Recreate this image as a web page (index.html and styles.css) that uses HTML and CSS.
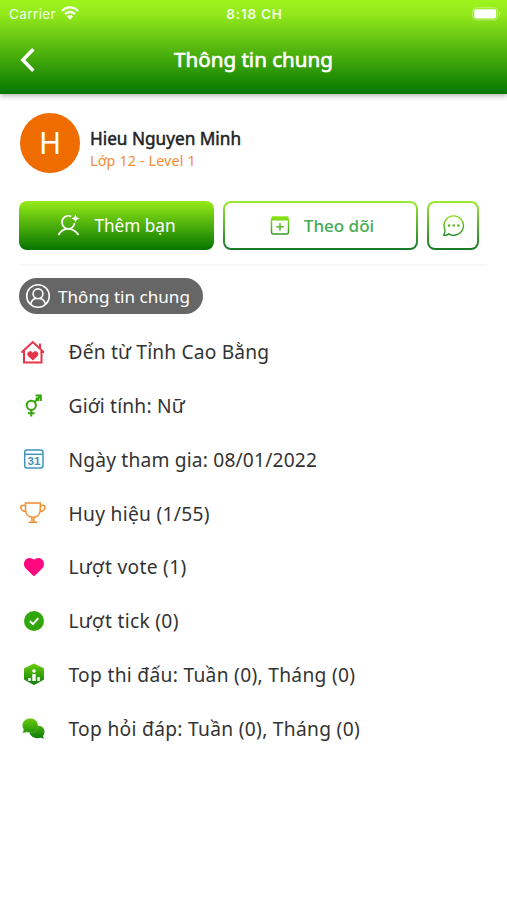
FILE: index.html
```html
<!DOCTYPE html>
<html lang="vi">
<head>
<meta charset="utf-8">
<title>Thông tin chung</title>
<link rel="stylesheet" href="styles.css">
</head>
<body>
<svg width="0" height="0" class="defs" aria-hidden="true">
  <defs>
    <linearGradient id="green" x1="0" y1="0" x2="0" y2="24" gradientUnits="userSpaceOnUse"><stop offset="0" stop-color="#93e81a"/><stop offset="1" stop-color="#188028"/></linearGradient>
    <linearGradient id="leaf" x1="0" y1="0" x2="0" y2="24" gradientUnits="userSpaceOnUse"><stop offset="0" stop-color="#79d80d"/><stop offset="1" stop-color="#087c08"/></linearGradient>
  </defs>
</svg>
<header class="header">
  <div class="status">
    <div class="carrier"><span>Carrier</span>
      <svg width="18" height="14" viewBox="0 0 18 14" fill="none" stroke="#fff" stroke-width="2.5"><path d="M.8 4.9Q9-2.4 17.2 4.9M3.900 8.100Q9 3.700 14.100 8.100"/><path d="M9 13.700 5.800 10.400Q9 7.800 12.200 10.400Z" fill="#fff" stroke="none"/></svg>
    </div>
    <span class="time">8:18 CH</span>
    <svg class="battery" width="30" height="14" viewBox="0 0 30 14"><rect x=".7" y=".7" width="25" height="12.2" rx="3.500" fill="none" stroke="#fff" stroke-opacity=".4"/><rect x="2.200" y="2.200" width="22" height="9.200" rx="1.800" fill="#fff"/><path d="M27.200 4.500q2.400 2.300 0 4.600z" fill="#fff" fill-opacity=".5"/></svg>
  </div>
  <div class="navbar">
    <svg class="back" width="16" height="26" viewBox="0 0 16 26" fill="none" stroke="#fff" stroke-width="3.500"><path d="M13.300 2.300 2.800 13l10.500 10.700"/></svg>
    <h1>Thông tin chung</h1>
  </div>
</header>
<main>
  <section class="profile">
    <div class="avatar">H</div>
    <div><div class="name">Hieu Nguyen Minh</div><div class="level">Lớp 12 - Level 1</div></div>
  </section>
  <section class="actions">
    <div class="btn primary">
      <svg width="24" height="24" viewBox="0 0 24 24" fill="none" stroke="#fff" stroke-width="1.700"><path d="M14.200 2.500A6.300 6.300 0 0 0 5 8c0 4 2.700 6.800 6 6.800S17 12.500 17.500 9M1.500 21c2-4 5.500-6.200 9.500-6.200s8 2.200 10.500 6.200"/><path d="M18.500 .5 19.700 3.300 22.500 4.500 19.700 5.700 18.500 8.500 17.300 5.700 14.500 4.500 17.300 3.300Z" fill="#fff" stroke="none"/></svg>
      <span>Thêm bạn</span>
    </div>
    <div class="btn outline follow">
      <svg width="20" height="19" viewBox="0 0 20 19" fill="none" stroke="url(#green)" stroke-width="1.500"><path d="M2.500 1h15l1 3v12a2 2 0 0 1-2 2H3.500a2 2 0 0 1-2-2V4zM10 7v7.500M6.300 10.800h7.400"/><path d="M2.500 1h15l1 3.500h-17z" fill="url(#green)" stroke="none"/></svg>
      <span>Theo dõi</span>
    </div>
    <div class="btn outline chat">
      <svg width="23" height="23" viewBox="0 0 23 23" fill="none" stroke="url(#green)" stroke-width="1.400"><path d="M2.900 15.500A9.700 9.700 0 1 1 6.800 19.900Q4.500 21.700 1.700 21.100Q3.200 19 2.900 15.500Z"/><g fill="url(#green)" stroke="none"><circle cx="7" cy="11.500" r="1.300"/><circle cx="11.700" cy="11.500" r="1.300"/><circle cx="16.400" cy="11.500" r="1.300"/></g></svg>
    </div>
  </section>
  <div class="divider"></div>
  <div class="pill">
    <svg width="26" height="26" viewBox="0 0 26 26" fill="none" stroke="#fff" stroke-width="1.600"><circle cx="13" cy="13" r="11.300"/><circle cx="13" cy="10.800" r="4.900"/><path d="M5.500 21.300Q7 16 11 15.400M20.500 21.300Q19 16 15 15.400"/></svg>
    <span>Thông tin chung</span>
  </div>
  <ul class="info">
    <li><svg viewBox="0 0 26 26" fill="none" stroke="#e8354a" stroke-width="2"><path d="M4 12.500v11.100h17.500V12.500M2 13 12.800 3 23.600 13"/><path d="M1.500 13h3.500M20.500 13h3.500M20 9V4.500"/><path d="M12.800 21.500 8 17C5.500 13.800 10.300 10.200 12.800 13.900c2.500-3.700 7.300-.1 4.800 3.100Z" fill="#e8354a" stroke="none"/></svg><span>Đến từ Tỉnh Cao Bằng</span></li>
    <li><svg viewBox="0 0 26 26" fill="none" stroke="#35a60b" stroke-width="2"><circle cx="11.300" cy="12.300" r="4.600"/><path d="m14.500 9 6-6M15.500 2.600h5.300v5.300M11.300 17v6.500M8 20.300h6.600M16 4.800l3 3"/></svg><span>Giới tính: Nữ</span></li>
    <li><svg viewBox="0 0 26 26" fill="none" stroke="#3f95ba" stroke-width="1.500"><rect x="4.700" y="4" width="18.300" height="18" rx="2.500"/><path d="M4.700 8.300h18"/><text x="13.900" y="19.400" class="date">31</text></svg><span>Ngày tham gia: 08/01/2022</span></li>
    <li class="loose"><svg viewBox="0 0 26 26" fill="none" stroke="#f58b2b" stroke-width="1.500"><path d="M5.500 3h14.800v6.500c0 5-3.200 7.800-7.400 7.800S5.500 14.500 5.500 9.500zM5.500 5.500H2Q.8 5.500.8 7C.8 9.500 3 11.500 6 11.500M20.300 5.500h3.500Q25 5.500 25 7c0 2.500-2.200 4.500-5.200 4.500M11.900 17.300v4M13.900 17.300v4M8.500 22.300h8.800"/></svg><span>Huy hiệu (1/55)</span></li>
    <li class="loose"><svg viewBox="0 0 26 26"><path d="M12.700 21.300 5.800 14.500C2.200 11 4.300 4.300 9 4q3-.2 5 1.600 2-1.800 5-1.600c4.700.3 6.800 7 3.200 10.500L15.300 21.300Q14 22.500 12.700 21.300" fill="#ff087f"/></svg><span>Lượt vote (1)</span></li>
    <li class="loose"><svg viewBox="0 0 26 26"><circle cx="14" cy="13" r="10" fill="#30a60b"/><path d="m9.800 13 3.200 3.200 5.300-6" fill="none" stroke="#fff" stroke-width="1.900"/></svg><span>Lượt tick (0)</span></li>
    <li class="loose"><svg viewBox="0 0 26 26"><path d="M14 2.500 23.300 7q.7.400.7 1.200v9.600q0 .8-.7 1.200L14 24l-9.300-5Q4 18.600 4 17.800V8.200Q4 7.400 4.700 7Z" fill="url(#leaf)"/><path d="M8.300 17h2.500v3H8.300zm4-4h3.400v7h-3.400zm5 3h2.500v4h-2.500z" fill="#fff"/><circle cx="14" cy="10" r="1.800" fill="#fff"/></svg><span>Top thi đấu: Tuần (0), Tháng (0)</span></li>
    <li class="loose"><svg viewBox="0 0 26 26"><path d="M24.500 16.500q0 3-1.500 4.500.1 1.500 1.500 2.500-2 .2-3.500-.8-9 2-11.500-4.700c0-9 15-10 15-1.500" fill="url(#leaf)"/><path d="M10.200 3.500c10 0 10.500 14 .8 14q-2.600.2-4.500-.8-1.500 1.300-4 .9 1.400-1.300 1.300-3.200C.5 9.500 4 3.500 10.200 3.500" fill="url(#leaf)" stroke="#7fc850" stroke-width=".3"/></svg><span>Top hỏi đáp: Tuần (0), Tháng (0)</span></li>
  </ul>
</main>
</body>
</html>
```
FILE: styles.css
```css
* { box-sizing: border-box; }
body { margin: 0; min-height: 900px; background: #fff; color: #333; font-family: "Noto Sans", sans-serif; }
svg { display: block; flex: none; }
.defs { position: absolute; }
.header { height: 94px; background: linear-gradient(#9df51c 0, #93e91a 15%, #047700 100%); box-shadow: 0 2px 5px rgba(0,0,0,.3); color: #fff; }
.status { height: 28px; padding: 0 6px 0 9px; display: grid; grid-template-columns: 1fr auto 1fr; align-items: center; font: 13.5px Inter, sans-serif; }
.carrier { display: flex; align-items: center; gap: 5px; opacity: .9; letter-spacing: .4px; }
.carrier svg { margin-top: -3px; }
.time { font-weight: 600; font-size: 13.5px; letter-spacing: .8px; opacity: .9; margin-left: -1px; white-space: nowrap; }
.battery { justify-self: end; margin-right: -1px; }
.navbar { height: 64px; display: grid; grid-template-columns: 40px 1fr 40px; align-items: center; }
.back { margin-left: 20px; }
h1 { margin: -2px 0 0; text-align: center; font-size: 20.6px; font-weight: 400; -webkit-text-stroke: .65px #fff; line-height: 28px; }
main { padding: 18px 20px 0 19px; }
.profile { height: 62px; display: flex; align-items: center; gap: 10px; padding-left: 1px; }
.avatar { width: 60px; height: 60px; border-radius: 50%; background: #ee6c00; color: #fff; font-size: 30px; line-height: 60px; text-align: center; }
.name { font-size: 17.2px; font-weight: 400; -webkit-text-stroke: .5px #222; line-height: 22px; color: #222; margin-top: 12px; }
.level { font-size: 14.3px; letter-spacing: .15px; line-height: 21px; color: #f58b32; }
.actions { display: flex; margin-top: 27px; gap: 9px; width: 460px; }
.btn { height: 49px; width: 195px; display: flex; align-items: center; justify-content: center; gap: 13px; border-radius: 8px; font-size: 17.200px; }
.primary { background: linear-gradient(#96eb17, #047400); color: #fff; }
.outline { border: 2px solid transparent; background: linear-gradient(#fff, #fff) padding-box, linear-gradient(#9cec32, #16792b) border-box; color: #45ac50; }
.follow { font-weight: 500; font-size: 17px; gap: 14px; padding-left: 3px; }
.chat { width: 52px; }
.divider { height: 2px; margin: 14px 0 12px; background: #f8f8f8; }
.pill { width: 184px; height: 36px; border-radius: 18px; background: #666; color: #fff; display: flex; align-items: center; padding-left: 6px; gap: 7px; font-size: 17.100px; }
.info { list-style: none; margin: 11px 0 0; padding: 0; font-size: 19.200px; letter-spacing: .18px; }
.info li { height: 53.75px; display: flex; align-items: center; gap: 22.500px; white-space: nowrap; }
.info .loose { letter-spacing: .3px; }
.info svg { width: 26px; height: 26px; margin-left: 1px; }
.date { font: 700 11.500px "Liberation Sans", sans-serif; letter-spacing: 0; text-anchor: middle; fill: #3f95ba; stroke: none; }
```
